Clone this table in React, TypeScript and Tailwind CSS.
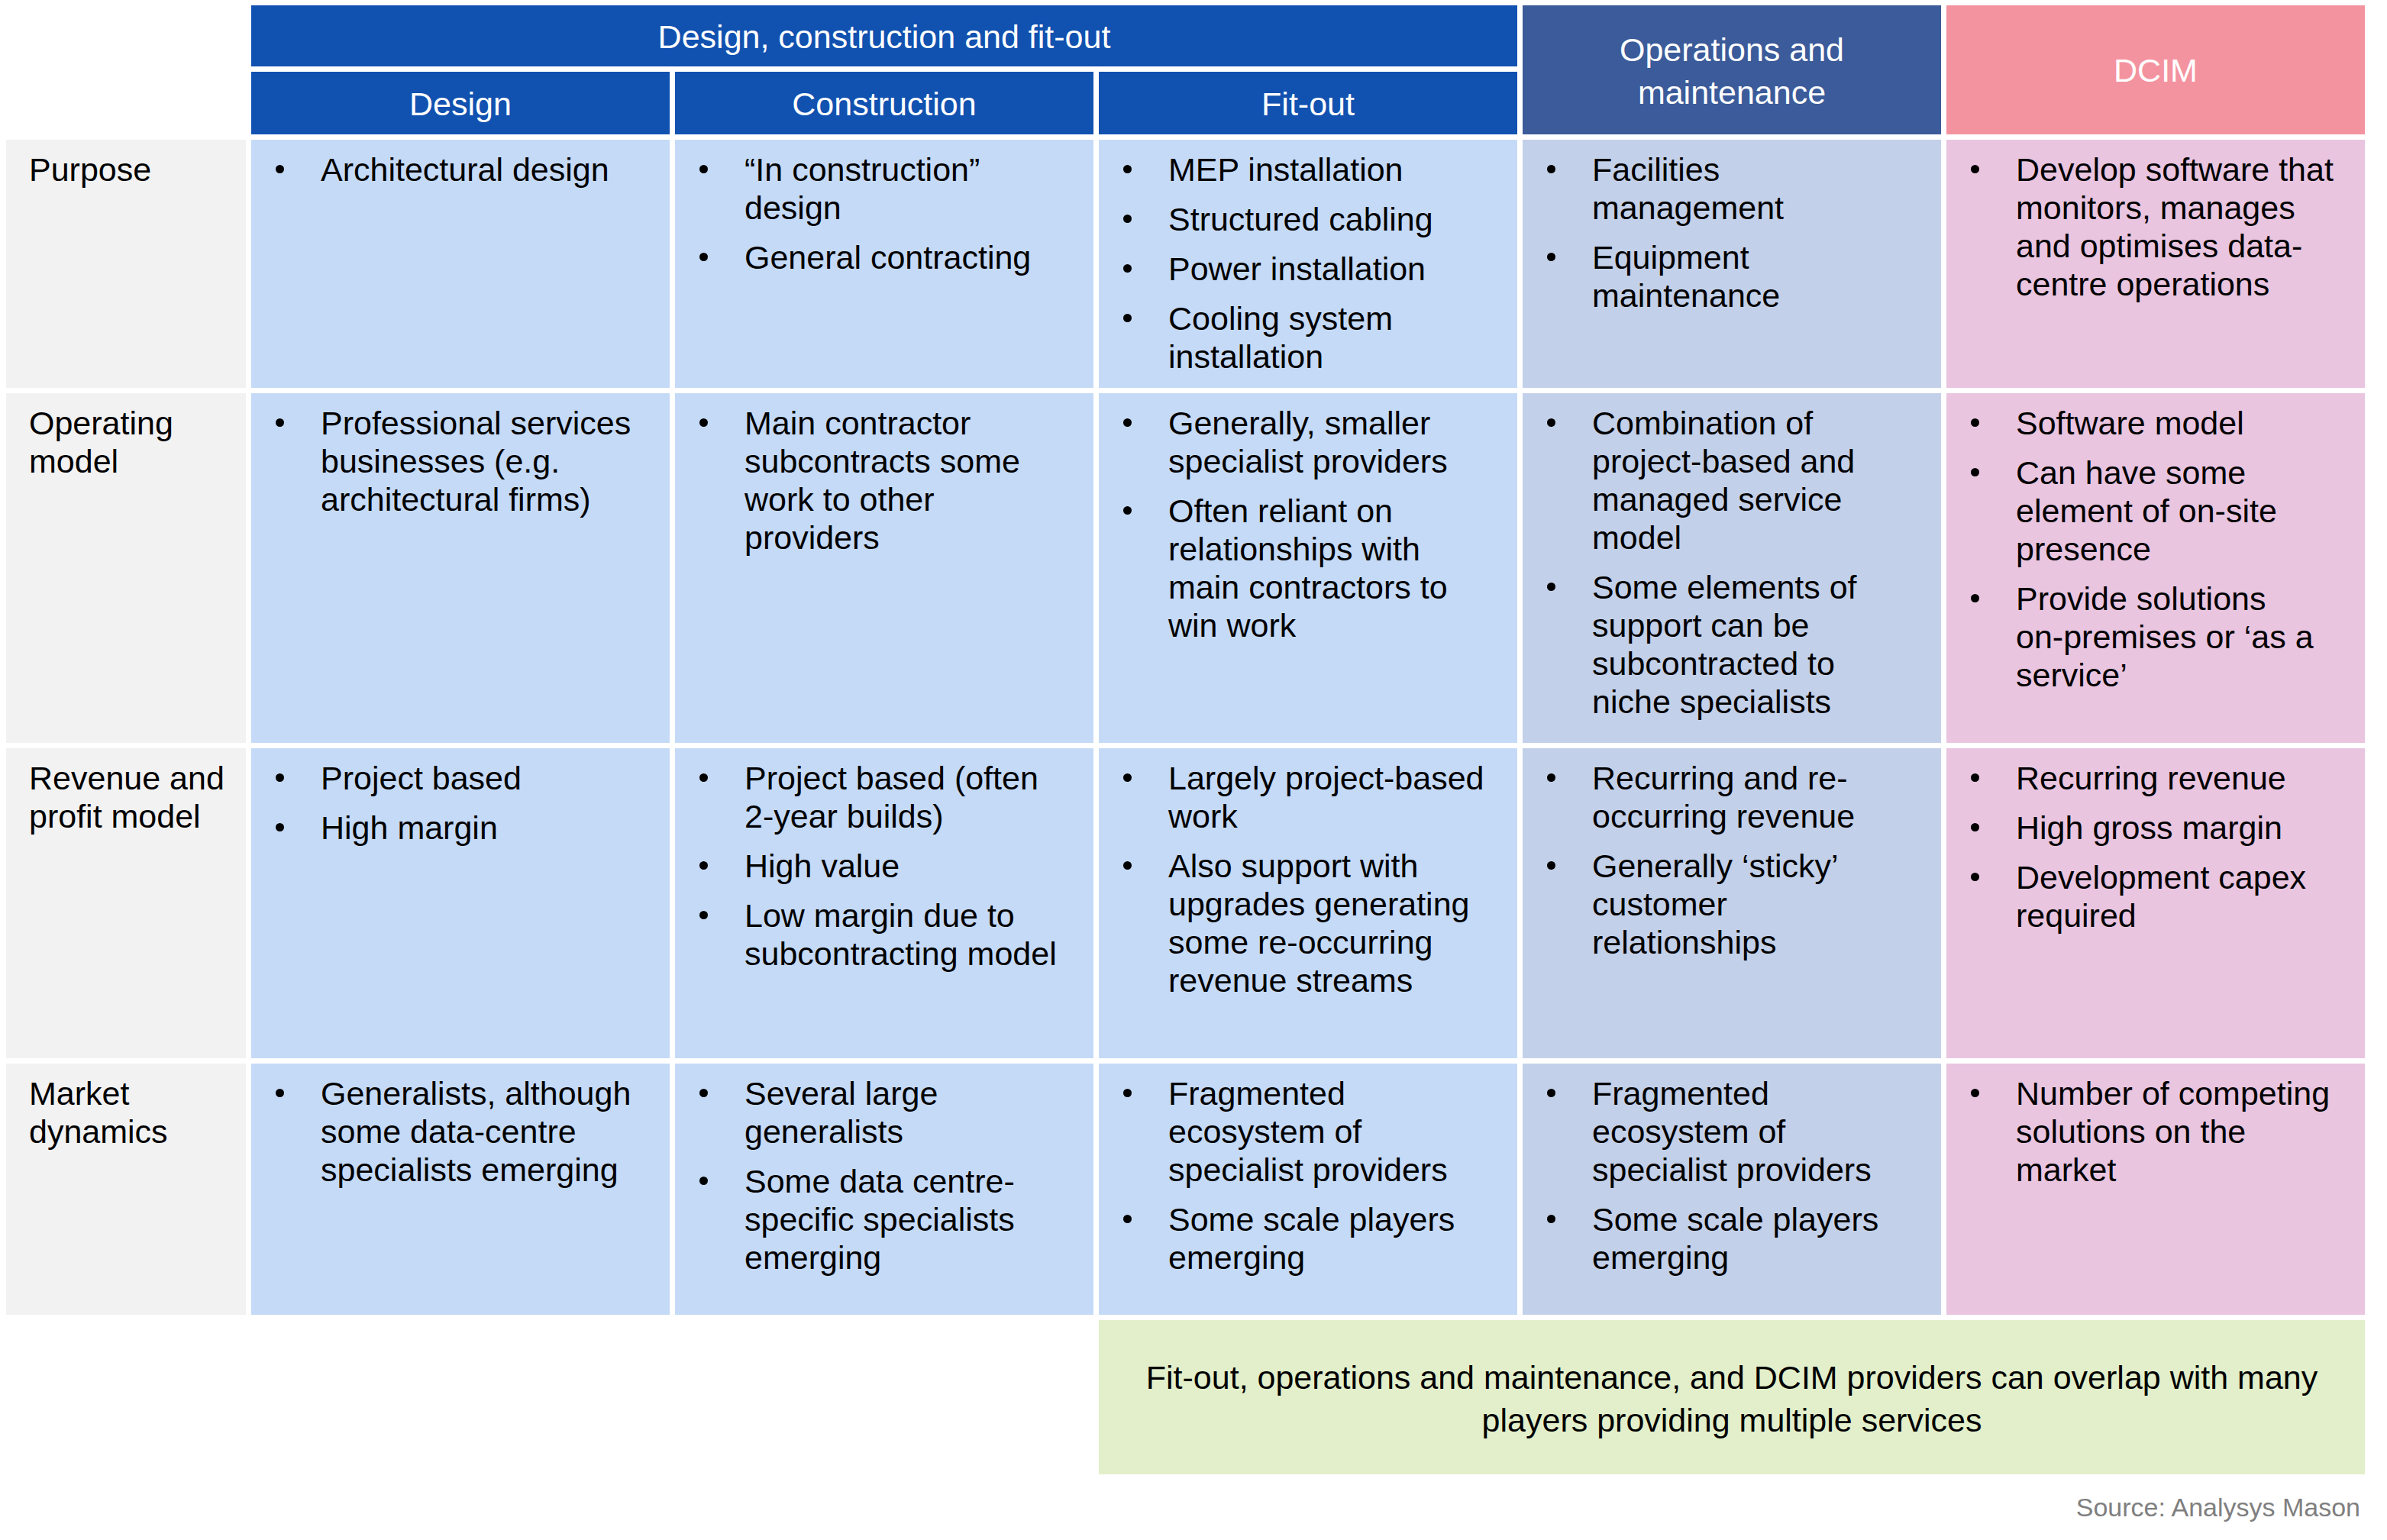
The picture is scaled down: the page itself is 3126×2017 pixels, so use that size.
import React from "react";

type Item = string[];
type Cell = Item[];

const FONT = "font-['Liberation_Sans',Arial,sans-serif]";

const rows: { label: string[]; cells: Cell[] }[] = [
  {
    label: ["Purpose"],
    cells: [
      [["Architectural design"]],
      [["“In construction”", "design"], ["General contracting"]],
      [["MEP installation"], ["Structured cabling"], ["Power installation"], ["Cooling system", "installation"]],
      [["Facilities", "management"], ["Equipment", "maintenance"]],
      [["Develop software that", "monitors, manages", "and optimises data-", "centre operations"]],
    ],
  },
  {
    label: ["Operating", "model"],
    cells: [
      [["Professional services", "businesses (e.g.", "architectural firms)"]],
      [["Main contractor", "subcontracts some", "work to other", "providers"]],
      [["Generally, smaller", "specialist providers"], ["Often reliant on", "relationships with", "main contractors to", "win work"]],
      [["Combination of", "project-based and", "managed service", "model"], ["Some elements of", "support can be", "subcontracted to", "niche specialists"]],
      [["Software model"], ["Can have some", "element of on-site", "presence"], ["Provide solutions", "on-premises or ‘as a", "service’"]],
    ],
  },
  {
    label: ["Revenue and", "profit model"],
    cells: [
      [["Project based"], ["High margin"]],
      [["Project based (often", "2-year builds)"], ["High value"], ["Low margin due to", "subcontracting model"]],
      [["Largely project-based", "work"], ["Also support with", "upgrades generating", "some re-occurring", "revenue streams"]],
      [["Recurring and re-", "occurring revenue"], ["Generally ‘sticky’", "customer", "relationships"]],
      [["Recurring revenue"], ["High gross margin"], ["Development capex", "required"]],
    ],
  },
  {
    label: ["Market", "dynamics"],
    cells: [
      [["Generalists, although", "some data-centre", "specialists emerging"]],
      [["Several large", "generalists"], ["Some data centre-", "specific specialists", "emerging"]],
      [["Fragmented", "ecosystem of", "specialist providers"], ["Some scale players", "emerging"]],
      [["Fragmented", "ecosystem of", "specialist providers"], ["Some scale players", "emerging"]],
      [["Number of competing", "solutions on the", "market"]],
    ],
  },
];

const cellBg = ["bg-[#c5daf7]", "bg-[#c5daf7]", "bg-[#c5daf7]", "bg-[#c3d0e9]", "bg-[#e9c5e0]"];

function Lines({ lines }: { lines: string[] }) {
  return (
    <div className="whitespace-nowrap leading-[50px]">
      {lines.map((l, i) => (
        <div key={i}>{l}</div>
      ))}
    </div>
  );
}

function BodyCell({ cell, bg }: { cell: Cell; bg: string }) {
  return (
    <div className={`${bg} pt-[14px] flex flex-col gap-[15px]`}>
      {cell.map((item, i) => (
        <div key={i} className="flex">
          <div className="w-[91px] shrink-0 pl-[32px] pt-[19px]">
            <div className="w-[11px] h-[11px] rounded-full bg-black" />
          </div>
          <Lines lines={item} />
        </div>
      ))}
    </div>
  );
}

export default function App() {
  return (
    <div className={`w-[3126px] h-[2017px] bg-white pt-[7px] pl-[8px] text-[43px] text-black ${FONT}`}>
      <div className="grid grid-cols-[314px_548px_548px_548px_548px_548px] grid-rows-[80px_82px_325px_458px_406px_329px_202px] gap-[7px]">
        <div className="col-start-1 row-start-1 row-span-2" />
        <div className="col-start-2 col-span-3 row-start-1 bg-[#1151b0] text-white flex items-center justify-center pt-[3px]">
          Design, construction and fit-out
        </div>
        <div className="col-start-5 row-start-1 row-span-2 bg-[#3b5b9a] text-white flex items-center justify-center text-center leading-[56px] pt-[2px]">
          <div>
            <div>Operations and</div>
            <div>maintenance</div>
          </div>
        </div>
        <div className="col-start-6 row-start-1 row-span-2 bg-[#f493a0] text-white flex items-center justify-center pt-[2px]">
          DCIM
        </div>
        <div className="col-start-2 row-start-2 bg-[#1151b0] text-white flex items-center justify-center pt-[3px]">Design</div>
        <div className="col-start-3 row-start-2 bg-[#1151b0] text-white flex items-center justify-center pt-[3px]">Construction</div>
        <div className="col-start-4 row-start-2 bg-[#1151b0] text-white flex items-center justify-center pt-[3px]">Fit-out</div>

        {rows.map((r, ri) => (
          <React.Fragment key={ri}>
            <div className="bg-[#f2f2f2] pt-[14px] pl-[30px]">
              <Lines lines={r.label} />
            </div>
            {r.cells.map((c, ci) => (
              <BodyCell key={ci} cell={c} bg={cellBg[ci]} />
            ))}
          </React.Fragment>
        ))}

        <div className="col-start-4 col-span-3 row-start-7 bg-[#e2efca] flex items-center justify-center text-center leading-[56px] pt-[4px]">
          <div>
            <div>Fit-out, operations and maintenance, and DCIM providers can overlap with many</div>
            <div>players providing multiple services</div>
          </div>
        </div>
      </div>
      <div className="w-[3089px] mt-[23px] pr-[6px] text-right text-[34px] leading-[40px] text-[#7f7f7f]">
        Source: Analysys Mason
      </div>
    </div>
  );
}
